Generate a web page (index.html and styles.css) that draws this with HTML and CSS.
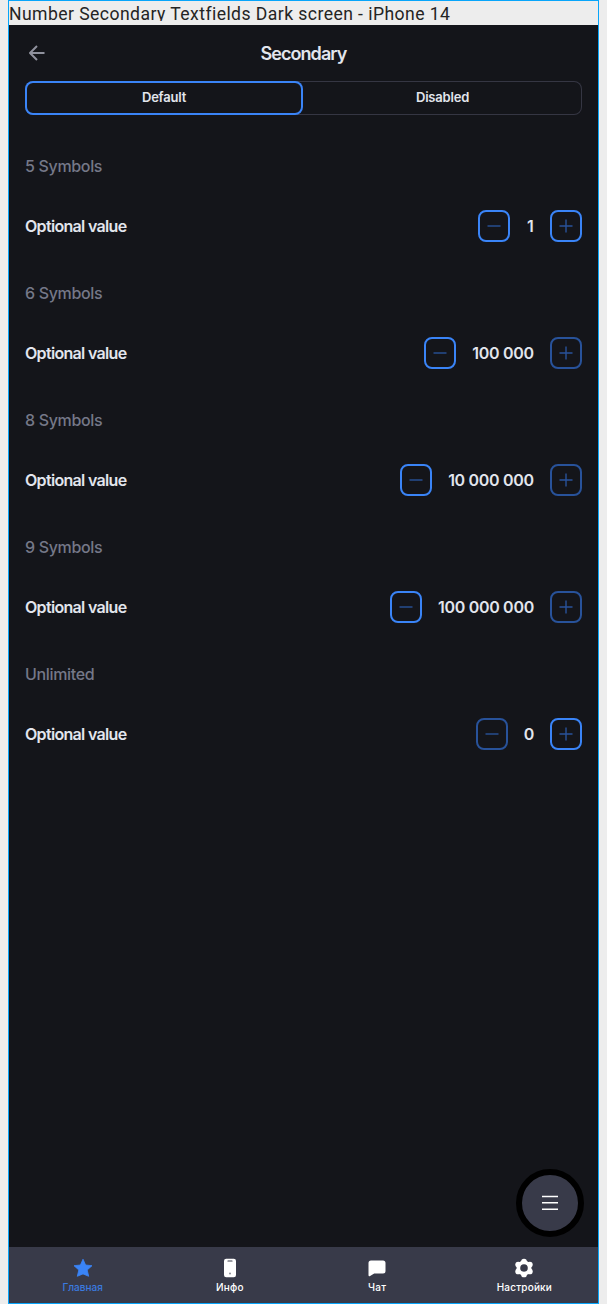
FILE: index.html
```html
<!DOCTYPE html>
<html lang="en">
<head>
<meta charset="utf-8">
<title>Number Secondary Textfields</title>
<link rel="stylesheet" href="styles.css">
</head>
<body>
<div class="frame">
  <div class="caption"><span class="caption-text">Number Secondary Textfields Dark screen - iPhone 14</span></div>
  <main class="screen">
    <header class="header">
      <svg class="back" viewBox="0 0 18 18"><path d="M16.5 9H2M9 2L2 9L9 16"/></svg>
      <h1 class="title">Secondary</h1>
    </header>
    <div class="tabs">
      <div class="tab tab-active">Default</div>
      <div class="tab">Disabled</div>
    </div>
    <div class="list">
      <section class="group">
        <h2 class="label">5 Symbols</h2>
        <div class="row"><span class="name">Optional value</span>
          <div class="btn"><svg class="sign" viewBox="0 0 14 14"><path d="M.5 7H13.5"/></svg></div>
          <span class="value v1">1</span>
          <div class="btn"><svg class="sign" viewBox="0 0 14 14"><path d="M.5 7H13.5M7 .5V13.5"/></svg></div>
        </div>
      </section>
      <section class="group">
        <h2 class="label">6 Symbols</h2>
        <div class="row"><span class="name">Optional value</span>
          <div class="btn"><svg class="sign" viewBox="0 0 14 14"><path d="M.5 7H13.5"/></svg></div>
          <span class="value v6">100 000</span>
          <div class="btn btn-off"><svg class="sign" viewBox="0 0 14 14"><path d="M.5 7H13.5M7 .5V13.5"/></svg></div>
        </div>
      </section>
      <section class="group">
        <h2 class="label">8 Symbols</h2>
        <div class="row"><span class="name">Optional value</span>
          <div class="btn"><svg class="sign" viewBox="0 0 14 14"><path d="M.5 7H13.5"/></svg></div>
          <span class="value v8">10 000 000</span>
          <div class="btn btn-off"><svg class="sign" viewBox="0 0 14 14"><path d="M.5 7H13.5M7 .5V13.5"/></svg></div>
        </div>
      </section>
      <section class="group">
        <h2 class="label">9 Symbols</h2>
        <div class="row"><span class="name">Optional value</span>
          <div class="btn"><svg class="sign" viewBox="0 0 14 14"><path d="M.5 7H13.5"/></svg></div>
          <span class="value v9">100 000 000</span>
          <div class="btn btn-off"><svg class="sign" viewBox="0 0 14 14"><path d="M.5 7H13.5M7 .5V13.5"/></svg></div>
        </div>
      </section>
      <section class="group">
        <h2 class="label">Unlimited</h2>
        <div class="row"><span class="name">Optional value</span>
          <div class="btn btn-off"><svg class="sign" viewBox="0 0 14 14"><path d="M.5 7H13.5"/></svg></div>
          <span class="value v0">0</span>
          <div class="btn"><svg class="sign" viewBox="0 0 14 14"><path d="M.5 7H13.5M7 .5V13.5"/></svg></div>
        </div>
      </section>
    </div>
    <nav class="nav">
      <div class="item item-active">
        <svg class="icon" viewBox="0 0 20 20"><path d="M10 1.2L12.6 7L19 7.7L14.2 12L15.7 18.3L10 15.9L4.3 18.3L5.8 12L1 7.7L7.4 7Z" fill="#3a84f7" stroke="#3a84f7" stroke-width=".8" stroke-linejoin="round"/></svg>
        <span>Главная</span>
      </div>
      <div class="item">
        <svg class="icon" viewBox="0 0 20 20"><rect x="4" y=".8" width="12" height="18.4" rx="2.2" fill="#fff"/><path d="M8 3H12" stroke="#383a49" stroke-width="1.2" stroke-linecap="round"/><circle cx="10" cy="15.5" r="1" fill="#8b8c95"/></svg>
        <span>Инфо</span>
      </div>
      <div class="item">
        <svg class="icon" viewBox="0 0 20 20"><path d="M4 2.6H16Q18.5 2.6 18.5 5.1V13Q18.5 15.5 16 15.5H7.2L3.1 18.1Q1.5 18.9 1.5 17V5.1Q1.5 2.6 4 2.6Z" fill="#fff"/></svg>
        <span>Чат</span>
      </div>
      <div class="item">
        <svg class="icon" viewBox="0 0 20 20"><g fill="#fff"><circle cx="10" cy="10" r="7.5"/><circle cx="10" cy="3.6" r="2.9"/><circle cx="15.8" cy="6.6" r="2.9"/><circle cx="15.8" cy="13.4" r="2.9"/><circle cx="10" cy="16.4" r="2.9"/><circle cx="4.2" cy="13.4" r="2.9"/><circle cx="4.2" cy="6.6" r="2.9"/></g><circle cx="10" cy="10" r="3.8" fill="#383a49"/></svg>
        <span>Настройки</span>
      </div>
    </nav>
  </main>
  <div class="fab"><svg class="menu" viewBox="0 0 16 16"><path d="M0 1.5H16M0 7.8H16M0 14.2H16"/></svg></div>
</div>
</body>
</html>
```
FILE: styles.css
```css
* { box-sizing: border-box; }
body {
  margin: 0;
  background: #ededed;
  font-family: Inter, "Liberation Sans", sans-serif;
  color: #e2e5ed;
}
.frame {
  position: relative;
  display: flex;
  flex-direction: column;
  width: 591px;
  height: 1304px;
  margin-left: 8px;
  border: 1px solid #08a5fa;
}
.caption { height: 24px; color: #242424; }
.caption-text {
  display: block;
  height: 20px;
  overflow: hidden;
  font: 17.6px/26px Roboto, sans-serif;
  letter-spacing: 0.43px;
  white-space: nowrap;
}
.screen {
  flex: 1;
  display: flex;
  flex-direction: column;
  background: #14151a;
}
.header {
  display: grid;
  grid-template-columns: 24px 1fr 24px;
  align-items: center;
  height: 56px;
  padding: 0 16px;
}
.back {
  width: 18px;
  height: 18px;
  margin-left: 3px;
  fill: none;
  stroke: #8f919d;
  stroke-width: 2;
  stroke-linejoin: round;
}
.title {
  margin: 1px 0 0;
  font-size: 18px;
  line-height: 24px;
  font-weight: 600;
  letter-spacing: -0.95px;
  text-align: center;
}
.tabs {
  display: flex;
  height: 34px;
  margin: 0 16px;
  border-radius: 8px;
  box-shadow: inset 0 0 0 1px #353643;
}
.tab {
  flex: 1;
  border-radius: 8px;
  font-size: 13px;
  line-height: 33px;
  font-weight: 600;
  letter-spacing: -0.2px;
  text-align: center;
}
.tab-active { flex: 0 0 278px; box-shadow: inset 0 0 0 2px #3a84f7; }
.list { flex: 1; padding: 31px 16px 0; }
.group { height: 127px; padding-top: 8px; }
.label {
  margin: 0 0 32px;
  font-size: 16px;
  line-height: 24px;
  font-weight: 500;
  letter-spacing: -0.33px;
  color: #757888;
}
.row { display: flex; align-items: center; height: 32px; }
.name { flex: 1; font-size: 16px; font-weight: 600; letter-spacing: -0.68px; }
.btn {
  display: flex;
  align-items: center;
  justify-content: center;
  width: 32px;
  height: 32px;
  border: 2px solid #3a84f7;
  border-radius: 8px;
}
.btn-off { border-color: #28529a; }
.sign { width: 14px; height: 14px; fill: none; stroke: #28529a; stroke-width: 1.4; }
.value {
  margin: 0 16px;
  font-size: 16px;
  font-weight: 600;
  letter-spacing: -0.3px;
  text-align: center;
  white-space: nowrap;
}
.v1 { width: 7.7px; }
.v6 { width: 62px; }
.v8 { width: 86px; }
.v9 { width: 96.2px; }
.v0 { width: 10.2px; }
.nav {
  display: grid;
  grid-template-columns: repeat(4, 1fr);
  height: 56px;
  background: #383a49;
}
.item {
  display: flex;
  flex-direction: column;
  align-items: center;
  padding-top: 10.5px;
  color: #fff;
  font-size: 10px;
  line-height: 12px;
  font-weight: 500;
  letter-spacing: 0.2px;
}
.item-active { color: #3a7be0; letter-spacing: 0; }
.icon { width: 20px; height: 20px; margin-bottom: 3.5px; }
.fab {
  position: absolute;
  left: 507px;
  top: 1168px;
  display: flex;
  align-items: center;
  justify-content: center;
  width: 68px;
  height: 68px;
  border: 6px solid #000;
  border-radius: 50%;
  background: #383a49;
}
.menu { width: 16px; height: 16px; fill: none; stroke: #fff; stroke-width: 1.6; }
```
